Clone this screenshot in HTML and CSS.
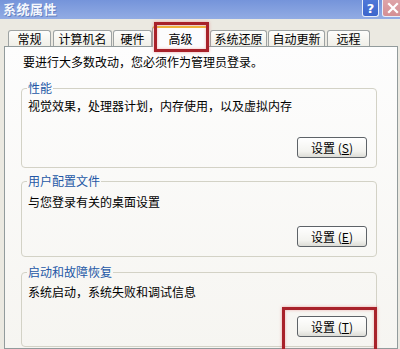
FILE: index.html
```html
<!DOCTYPE html>
<html lang="zh-CN">
<head>
<meta charset="utf-8">
<link rel="stylesheet" href="styles.css">
</head>
<body>
<div class="window">
  <div class="titlebar">
    <span class="title">系统属性</span>
    <div class="ctrls">
      <span class="cbtn help">?</span>
      <span class="cbtn close">
        <svg width="12" height="12" viewBox="0 0 12 12"><path d="M2 2L10 10M10 2L2 10" stroke="#fff" stroke-width="2.2" stroke-linecap="square"/></svg>
      </span>
    </div>
  </div>
  <div class="tabs">
    <div class="tab t1">常规</div>
    <div class="tab t2">计算机名</div>
    <div class="tab t3">硬件</div>
    <div class="tab active">高级</div>
    <div class="tab t5">系统还原</div>
    <div class="tab t6">自动更新</div>
    <div class="tab t7">远程</div>
  </div>
  <div class="panel">
    <p class="intro">要进行大多数改动，您必须作为管理员登录。</p>
    <fieldset class="group g1">
      <legend>性能</legend>
      <p class="desc">视觉效果，处理器计划，内存使用，以及虚拟内存</p>
      <div class="row"><button class="btn">设置 (<u>S</u>)</button></div>
    </fieldset>
    <fieldset class="group g2">
      <legend>用户配置文件</legend>
      <p class="desc">与您登录有关的桌面设置</p>
      <div class="row"><button class="btn">设置 (<u>E</u>)</button></div>
    </fieldset>
    <fieldset class="group g3">
      <legend>启动和故障恢复</legend>
      <p class="desc">系统启动，系统失败和调试信息</p>
      <div class="row"><button class="btn">设置 (<u>T</u>)</button></div>
    </fieldset>
  </div>
  <div class="mark mark-tab"></div>
  <div class="mark mark-btn"></div>
</div>
</body>
</html>
```

FILE: styles.css
```css
* { box-sizing: border-box; }
html, body {
  margin: 0;
  padding: 0;
  width: 400px;
  height: 349px;
  overflow: hidden;
  background: #ebe9e1;
  font-family: "Noto Sans CJK SC", "Noto Sans", sans-serif;
  font-size: 12px;
  color: #000;
}
.window {
  position: relative;
  width: 400px;
  height: 349px;
  overflow: hidden;
}
.titlebar {
  height: 19px;
  display: flex;
  justify-content: space-between;
  align-items: flex-start;
  background: linear-gradient(#7594da, #92ace4);
}
.title {
  padding: 1px 0 0 3px;
  font-size: 13px;
  line-height: 15px;
  font-weight: bold;
  color: #f4f7fd;
  text-shadow: 1px 1px 0 #6480c0;
  letter-spacing: 0.5px;
}
.ctrls {
  display: flex;
  gap: 3px;
  margin-right: -3px;
}
.cbtn {
  height: 17px;
  display: flex;
  align-items: center;
  justify-content: center;
  border: 1px solid #e8eefa;
  border-top: none;
  border-radius: 0 0 3px 3px;
  color: #fff;
  font-weight: bold;
  font-family: "DejaVu Sans", sans-serif;
  font-size: 13px;
}
.help {
  width: 17px;
  background: linear-gradient(#4f78d8, #3d66cc);
}
.close {
  width: 21px;
  background: linear-gradient(#dea4a8, #d48f94);
}
.tabs {
  height: 27px;
  display: flex;
  align-items: flex-end;
  padding-left: 8px;
  position: relative;
  z-index: 2;
}
.tab {
  height: 16px;
  line-height: 15px;
  text-align: center;
  border: 1px solid #9ea3a3;
  border-bottom: none;
  border-radius: 3px 3px 0 0;
  background: linear-gradient(#fdfdfb, #f0efe8);
}
.t1 { width: 43px; margin-right: 2px; }
.t2 { width: 59px; margin-right: 1px; }
.t3 { width: 39px; }
.active {
  width: 57px;
  height: 21px;
  line-height: 20px;
  background: #fcfcfd;
  border-top: 2px solid #f0b53a;
  margin-bottom: -1px;
  padding-top: 1px;
}
.t5 { width: 57px; margin-left: 1px; margin-right: 1px; }
.t6 { width: 57px; margin-right: 2px; }
.t7 { width: 43px; }
.panel {
  margin-left: 4px;
  width: 394px;
  height: 303px;
  border: 1px solid #929b9c;
  background: linear-gradient(#fdfdfd, #f6f5f1);
  padding: 8px 20px 0 16px;
}
.intro {
  margin: 0 0 0 2px;
  line-height: 14px;
}
.group {
  margin: 0;
  padding: 0 9px 9px 5px;
  border: 1px solid #d3d2c6;
  border-radius: 4px;
  min-width: 0;
}
.group legend {
  padding: 0 1px;
  line-height: 14px;
  color: #2458a6;
}
.g1 { margin-top: 12px; }
.g2 { margin-top: 6px; }
.g3 { margin-top: 8px; }
.desc {
  margin: 0 0 0 1px;
  line-height: 14px;
}
.g1 .desc { margin-top: 4px; }
.g2 .desc { margin-top: 7px; }
.g3 .desc { margin-top: 6px; }
.row {
  display: flex;
  justify-content: flex-end;
}
.g1 .row { margin-top: 24px; }
.g2 .row { margin-top: 17px; }
.g3 .row { margin-top: 17px; }
.btn {
  width: 70px;
  height: 21px;
  padding: 0;
  border: 1px solid #5e6368;
  border-radius: 3px;
  background: linear-gradient(#ffffff, #f3f3ef 70%, #dcdcd6);
  font-family: "Noto Sans CJK SC", "Noto Sans", sans-serif;
  font-size: 12px;
  line-height: 18px;
  color: #000;
}
.btn u { text-decoration: underline; }
.mark {
  position: absolute;
  border: 3px solid #a8222a;
  box-shadow: 0 0 3px rgba(230, 110, 110, 0.6), inset 0 0 3px rgba(230, 110, 110, 0.5);
  z-index: 5;
}
.mark-tab {
  left: 154px;
  top: 22px;
  width: 55px;
  height: 30px;
}
.mark-btn {
  left: 282px;
  top: 307px;
  width: 95px;
  height: 46px;
}
```
